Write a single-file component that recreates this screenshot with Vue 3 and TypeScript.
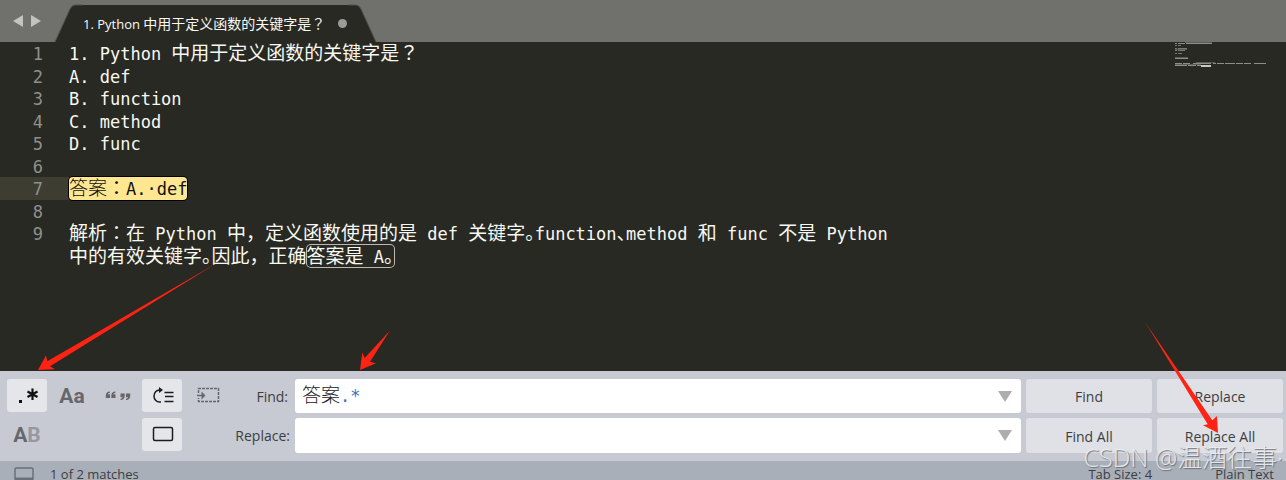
<script setup lang="ts">
import { computed, ref } from 'vue'

type Kind = 'latin' | 'wide' | 'half' | 'centred'
interface Run { text: string; kind: Kind }
interface Segment { text: string; mark?: 'current' | 'other' }
interface Row { no: number | null; segments: Segment[] }

const title = '1. Python 中用于定义函数的关键字是？'
const rows: Row[] = [
  { no: 1, segments: [{ text: title }] },
  { no: 2, segments: [{ text: 'A. def' }] },
  { no: 3, segments: [{ text: 'B. function' }] },
  { no: 4, segments: [{ text: 'C. method' }] },
  { no: 5, segments: [{ text: 'D. func' }] },
  { no: 6, segments: [] },
  { no: 7, segments: [{ text: '答案：A.·def', mark: 'current' }] },
  { no: 8, segments: [] },
  { no: 9, segments: [{ text: '解析：在 Python 中，定义函数使用的是 def 关键字。function、method 和 func 不是 Python' }] },
  { no: null, segments: [{ text: '中的有效关键字。因此，正确' }, { text: '答案是 A。', mark: 'other' }] },
]

function kindOf(part: string): Kind {
  if (/[。、]/.test(part)) return 'half'
  if (/[：？]/.test(part)) return 'centred'
  return /[\u4e00-\u9fff，]/.test(part) ? 'wide' : 'latin'
}

function runs(text: string): Run[] {
  const parts = text.match(/[。、]|[：？]|[\u4e00-\u9fff，]+|[^\u4e00-\u9fff：，？。、]+/g) ?? []
  return parts.map((part) => ({ text: part, kind: kindOf(part) }))
}

const find = ref('答案.*')
const replacement = ref('')
const findTokens = computed(() => find.value.split(/([.*+?^$|]+)/).filter(Boolean))
const isOperator = (token: string) => /^[.*+?^$|]+$/.test(token)
</script>

<template>
  <main class="window">
    <header class="tabbar">
      <nav class="history">
        <button type="button" aria-label="Previous tab">
          <svg width="10" height="12" viewBox="0 0 10 12"><path d="M10 0V12L0 6Z" /></svg>
        </button>
        <button type="button" aria-label="Next tab">
          <svg width="10" height="12" viewBox="0 0 10 12"><path d="M0 0V12L10 6Z" /></svg>
        </button>
      </nav>
      <button type="button" class="tab">
        <svg class="slope" width="28" height="37" viewBox="0 0 28 37"><path d="M0 37L15 4Q17 0 20 0H28V37Z" /><path class="edge" d="M0 37L15 4Q17 0 20 0H28" /></svg>
        <span class="tab-body"><span><span v-for="(run, r) in runs(title)" :key="r" :class="'tab-' + run.kind">{{ run.text }}</span></span><i class="dirty"></i></span>
        <svg class="slope" width="28" height="37" viewBox="0 0 28 37"><path d="M28 37L13 4Q11 0 8 0H0V37Z" /><path class="edge" d="M28 37L13 4Q11 0 8 0H0" /></svg>
      </button>
    </header>

    <section class="editor">
      <div class="code">
        <div v-for="(row, i) in rows" :key="i" class="row">
          <span class="number" :class="{ active: row.no === 7 }">{{ row.no }}</span>
          <span class="line"><span v-for="(seg, s) in row.segments" :key="s" :class="seg.mark"><span v-for="(run, r) in runs(seg.text)" :key="r" :class="run.kind">{{ run.text }}</span></span></span>
        </div>
      </div>
      <svg class="minimap" width="94" height="28" viewBox="0 0 94 28">
        <g fill="none" stroke="#8d8e88" stroke-width="1">
          <path d="M0 1.5H37" stroke-dasharray="2 1 7 1 26 1" />
          <path d="M0 3.5H6M0 6.5H12M0 8.5H10M0 11.5H7" stroke-dasharray="2 1 12 1" opacity=".8" />
          <path d="M0 16.5H13" />
          <path d="M0 21.5H91" stroke-dasharray="7 1 7 3 18 2 3 1 7 1 10 1" />
          <path d="M0 23.5H26" stroke-dasharray="12 1 8 1" />
        </g>
        <g fill="none" stroke="#8d8e88" stroke-width="1" opacity=".5">
          <path d="M10 .5H37M0 7.5H12M0 15.5H13M21 20.500H40M0 22.500H26" />
        </g>
        <rect x="26" y="23" width="10" height="2" fill="#c9cac4" />
      </svg>
    </section>

    <form class="panel" @submit.prevent>
      <button type="button" class="tool on" aria-label="Regular expression">
        <svg width="40" height="33" viewBox="0 0 40 33">
          <rect x="12" y="21" width="3" height="3" fill="#111" />
          <path d="M25.500 9.500V21M20.500 12.500L30.500 18M30.500 12.500L20.500 18" stroke="#111" stroke-width="2.200" />
        </svg>
      </button>
      <button type="button" class="tool glyph" aria-label="Case sensitive">Aa</button>
      <button type="button" class="tool" aria-label="Whole word">
        <svg width="40" height="33" viewBox="0 0 40 33" fill="#66676b">
          <path d="M13 12.500C10 12.500 8.800 14.500 8.800 16.500V19H13V15.200H10.800Q11 13.900 13 13.800ZM18.500 12.500C15.500 12.500 14.300 14.500 14.300 16.500V19H18.500V15.200H16.300Q16.500 13.900 18.500 13.800Z" />
          <path d="M23.500 21C26.500 21 27.700 19 27.700 17V14.500H23.500V18.300H25.700Q25.500 19.600 23.500 19.700ZM29 21C32 21 33.200 19 33.200 17V14.500H29V18.300H31.200Q31 19.600 29 19.700Z" />
        </svg>
      </button>
      <button type="button" class="tool on" aria-label="Wrap">
        <svg width="40" height="33" viewBox="0 0 40 33" fill="none" stroke="#1c1c1e" stroke-width="1.500">
          <path d="M18 11H17.500A5.500 6 0 0 0 17.500 23H19" />
          <path d="M17 8L21 11L17 14Z" fill="#1c1c1e" stroke="none" />
          <path d="M22.500 13.500H31.500M23 17.500H31.500M22.500 22.500H31.500" />
        </svg>
      </button>
      <button type="button" class="tool" aria-label="In selection">
        <svg width="40" height="33" viewBox="0 0 40 33" fill="none" stroke="#66676b" stroke-width="1.500">
          <path d="M11.500 14V9.500H31.500V22.500H11.500V19" stroke-dasharray="3 1" />
          <path d="M10 16.500H16" /><path d="M14.500 12.500L18.500 16.500L14.500 20.500Z" fill="#66676b" stroke="none" />
        </svg>
      </button>
      <label class="label find-label" for="find">Find:</label>
      <div class="field">
        <input id="find" v-model="find" class="tinted" type="text" spellcheck="false" />
        <span class="tint" aria-hidden="true"><span v-for="(token, t) in findTokens" :key="t" :class="isOperator(token) ? 'operator' : 'wide'">{{ token }}</span></span>
        <button type="button" class="drop" aria-label="Find history"><svg width="14" height="11" viewBox="0 0 14 11"><path d="M0 0H14L7 11Z" /></svg></button>
      </div>
      <button type="button" class="action">Find</button>
      <button type="button" class="action">Replace</button>

      <button type="button" class="tool glyph preserve" aria-label="Preserve case">A<span>B</span></button>
      <button type="button" class="tool on highlight" aria-label="Highlight matches">
        <svg width="40" height="33" viewBox="0 0 40 33"><rect x="11.500" y="9.500" width="19" height="13" rx="1.500" fill="none" stroke="#1c1c1e" stroke-width="1.500" /></svg>
      </button>
      <label class="label replace-label" for="replace">Replace:</label>
      <div class="field">
        <input id="replace" v-model="replacement" type="text" spellcheck="false" />
        <button type="button" class="drop" aria-label="Replace history"><svg width="14" height="11" viewBox="0 0 14 11"><path d="M0 0H14L7 11Z" /></svg></button>
      </div>
      <button type="button" class="action">Find All</button>
      <button type="submit" class="action">Replace All</button>
    </form>

    <footer class="status">
      <svg width="20" height="14" viewBox="0 0 20 14"><rect x="1" y="1" width="18" height="12" rx="1.500" fill="none" stroke="#6c7178" stroke-width="1.500" /><path d="M1 10.500H19V14H1Z" fill="#6c7178" /></svg>
      <span class="matches">1 of 2 matches</span>
      <span class="tabsize">Tab Size: 4</span>
      <span>Plain Text</span>
    </footer>

    <svg class="arrows left" width="400" height="120" viewBox="0 260 400 120">
      <path d="M38 370L46 355.500L47.300 361.300L217 263L50 366.300L55 369.200Z" />
      <path d="M360 370L362.300 352.500L364.700 358L390 330.500L370 361.700L376 363.300Z" />
    </svg>
    <svg class="arrows right" width="146" height="120" viewBox="1140 320 146 120">
      <path d="M1145 322L1212.300 420.300L1217 416L1218 433L1203 425.300L1207.700 424.300Z" />
    </svg>
    <div class="watermark">CSDN @温酒往事·</div>
  </main>
</template>

<style>
body { margin: 0; overflow: hidden; }
</style>

<style scoped>
.window {
  position: relative;
  display: flex;
  flex-direction: column;
  min-height: 100vh;
  overflow: hidden;
  background: #282923;
  color: #3d3e42;
  font-family: "Open Sans", "Noto Sans CJK SC", sans-serif;
  font-size: 14px;
}
button, input { border: 0; padding: 0; margin: 0; font: inherit; color: inherit; background: none; outline: none; }
svg { display: block; }
.tabbar { display: flex; align-items: flex-end; height: 42px; background: #70716c; }
.history { display: flex; align-items: center; gap: 8px; height: 42px; width: 42px; padding-left: 13px; }
.history svg { fill: #c3c4c1; }
.tab { display: flex; height: 37px; color: #f8f8f4; }
.slope { fill: #282923; overflow: visible; }
.edge { fill: none; stroke: #50514c; stroke-width: 1; }
.tab-body { display: flex; align-items: center; gap: 13px; height: 37px; padding-right: 1px; background: #282923; white-space: pre; font-size: 13px; line-height: 20px; }
.tab-wide, .tab-centred { font-family: "Noto Sans CJK SC", sans-serif; font-size: 14px; line-height: 0; }
.tab-centred { font-family: "Noto Sans CJK TC", sans-serif; }
.dirty { width: 9px; height: 9px; border-radius: 50%; background: #9b9c98; }
.editor { flex: 1; display: flex; align-items: flex-start; justify-content: space-between; padding-right: 17px; color: #f8f8f2; }
.code { font-family: "DejaVu Sans Mono", "Noto Sans CJK SC", monospace; font-size: 17px; }
.row { display: flex; height: 22px; line-height: 24px; white-space: pre; }
.row:nth-child(odd) { height: 23px; line-height: 25px; }
.number { box-sizing: border-box; width: 69px; padding-right: 26px; text-align: right; color: #8f908a; }
.number.active { background: #3e3d32; }
.line { display: flex; }
.wide, .half, .centred { font-family: "Noto Sans CJK SC", sans-serif; font-size: 19px; line-height: 0; }
.half { font-feature-settings: "halt"; }
.centred { font-family: "Noto Sans CJK TC", sans-serif; }
.current { background: #ffe792; color: #111; border-radius: 4px; box-shadow: 0 0 0 1px #000; }
.current .wide { font-weight: 300; }
.other { border-radius: 4px; box-shadow: 0 0 0 1px #b9bab4; }
.panel {
  display: grid;
  grid-template-columns: repeat(5, 40px) 58px minmax(0, 1fr) 126px 126px;
  grid-template-rows: 34px 35px;
  gap: 5px;
  padding: 8px 3px 8px 7px;
  background: #c7cad2;
}
.tool { height: 33px; border-radius: 3px; }
.on { background: #e5e6ea; }
.glyph { font-family: Roboto, sans-serif; font-size: 21px; font-weight: 700; color: #66676b; }
.preserve { grid-column: 1; }
.preserve span { color: #9698a0; }
.highlight { grid-column: 4; }
.label { align-self: center; text-align: right; }
.find-label { padding-right: 2px; }
.replace-label { grid-column: 6; }
.field { position: relative; display: flex; border-radius: 3px; background: #fff; }
.field input { flex: 1; min-width: 0; padding: 0 7px; font-family: "DejaVu Sans Mono", "Noto Sans CJK SC", monospace; font-size: 17px; }
.field .tinted { color: transparent; caret-color: #222; }
.tint { position: absolute; left: 7px; top: 0; line-height: 34px; white-space: pre; pointer-events: none; color: #222; font-family: "DejaVu Sans Mono", monospace; font-size: 17px; }
.tint .wide { font-weight: 300; }
.operator { color: #3b73b9; }
.drop { width: 33px; padding-left: 10px; }
.drop svg { fill: #adadad; }
.action { border-radius: 3px; background: #e0e1e6; padding-top: 1px; }
.status { display: flex; align-items: flex-start; height: 19px; line-height: 18px; padding: 0 12px 0 14px; background: #a9afb9; white-space: nowrap; font-size: 13px; }
.status > * { flex: none; margin-top: 4px; }
.status > svg { margin-top: 6px; }
.status .matches { flex: 1; margin-left: 16px; }
.tabsize { margin-right: 63px; }
.arrows { position: absolute; fill: #ff2314; pointer-events: none; }
.left { left: 0; top: 260px; }
.right { right: 0; top: 320px; }
.watermark { position: absolute; right: 3px; bottom: 5px; font-family: "Open Sans", "Noto Sans CJK SC", sans-serif; font-size: 25px; font-weight: 300; line-height: 36px; color: rgba(238, 239, 242, .9); text-shadow: 1px 1px 1px #6c7078; pointer-events: none; }
</style>
